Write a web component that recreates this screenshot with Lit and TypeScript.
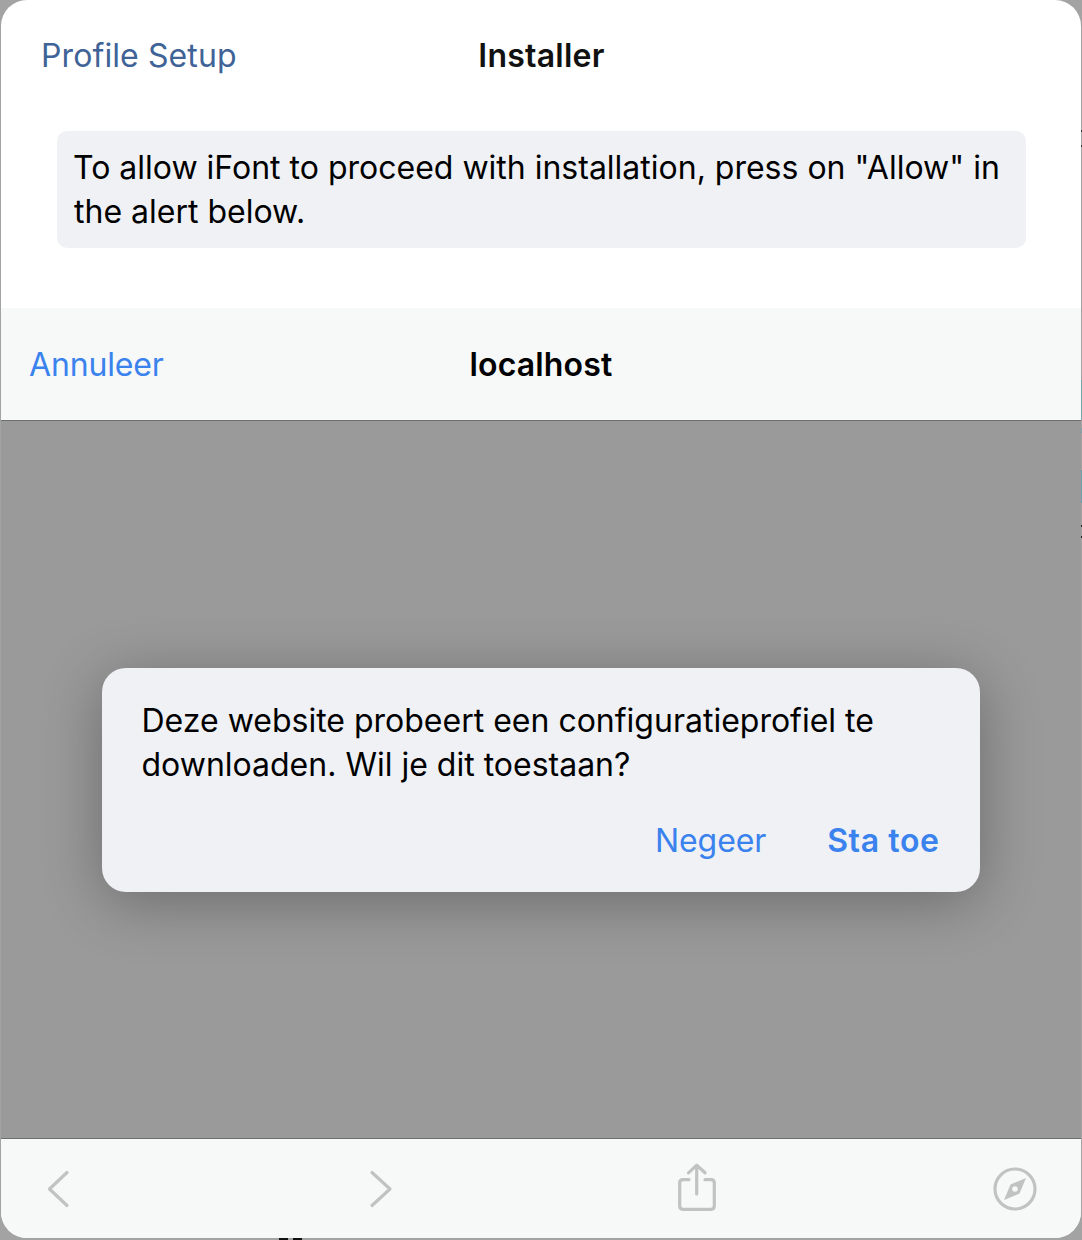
import { LitElement, html, css } from "lit"
import { customElement } from "lit/decorators.js"

// slivers of the page behind the sheet, visible along its right and bottom edge
const EDGE_MARKS = [
  { x: 1081, y: 130, w: 1, h: 2, color: "#333" },
  { x: 1081, y: 145, w: 1, h: 2, color: "#333" },
  { x: 1081, y: 380, w: 1, h: 40, color: "#6fa9ad" },
  { x: 1081, y: 428, w: 1, h: 5, color: "#7fa5ad" },
  { x: 1081, y: 470, w: 1, h: 33, color: "#6d9fb3" },
  { x: 1081, y: 525, w: 1, h: 2, color: "#222" },
  { x: 1081, y: 536, w: 1, h: 2, color: "#222" },
  { x: 279, y: 1238, w: 9, h: 2, color: "#111" },
  { x: 293, y: 1238, w: 9, h: 2, color: "#111" },
]

@customElement("app-root")
export class AppRoot extends LitElement {
  static styles = css`
    :host {
      display: block;
      position: relative;
      width: 1082px;
      height: 1240px;
      background: #a3a3a3;
      font-family: Inter, "Liberation Sans", sans-serif;
      color: #000;
      overflow: hidden;
    }

    .mark {
      position: absolute;
    }

    .sheet {
      width: 1080px;
      height: 1238px;
      margin-left: 1px;
      border-radius: 26px;
      overflow: hidden;
      display: flex;
      flex-direction: column;
      background: #fff;
    }

    .setup {
      height: 308px;
      flex: none;
      box-sizing: border-box;
      padding: 0 55px 0 56px;
      display: flex;
      flex-direction: column;
    }

    .nav {
      height: 111px;
      flex: none;
      display: grid;
      grid-template-columns: 1fr auto 1fr;
      align-items: center;
      font-size: 32px;
    }

    .nav .back {
      margin-left: -16px;
      margin-bottom: 1px;
      letter-spacing: 0.1px;
      color: #3f6397;
    }

    .nav .title {
      font-weight: 600;
      letter-spacing: 0.25px;
      color: #111;
    }

    .banner {
      margin-top: 20px;
      height: 117px;
      box-sizing: border-box;
      padding: 15px 17px;
      border-radius: 10px;
      background: #eff1f5;
      font-size: 32px;
      line-height: 44px;
      text-indent: -1px;
    }

    .webbar {
      height: 113px;
      flex: none;
      box-sizing: border-box;
      padding-left: 28px;
      background: #f7f8f8;
      border-bottom: 1px solid #6f6f6f;
      display: grid;
      grid-template-columns: 1fr auto 1fr;
      align-items: center;
      font-size: 32px;
    }

    .webbar .cancel {
      letter-spacing: -0.15px;
      color: #3a82ee;
    }

    .webbar .title {
      margin-left: -28px;
      font-weight: 600;
      letter-spacing: 0.15px;
    }

    .dim {
      flex: 1;
      background: #9a9a9a;
      display: flex;
      justify-content: center;
      align-items: flex-start;
    }

    .alert {
      width: 878px;
      height: 224px;
      margin-top: 247px;
      margin-right: 1px;
      box-sizing: border-box;
      padding: 31px 40px 0;
      border-radius: 24px;
      background: #eff1f5;
      box-shadow: 0 10px 60px rgba(0, 0, 0, 0.3);
      font-size: 32px;
      line-height: 44px;
    }

    .actions {
      display: flex;
      justify-content: flex-end;
      gap: 61px;
      margin-top: 32px;
      color: #3a82ee;
    }

    .actions .quiet {
      letter-spacing: -0.1px;
    }

    .actions .primary {
      font-weight: 600;
      letter-spacing: 0.6px;
    }

    .toolbar {
      height: 100px;
      flex: none;
      box-sizing: border-box;
      padding: 21px 41px 0 44px;
      border-top: 1px solid #6f6f6f;
      background: #f7f8f8;
      display: flex;
      align-items: flex-start;
    }

    .toolbar svg {
      flex: none;
      fill: none;
      stroke: #c2c2c2;
      stroke-width: 3.2;
      stroke-linecap: round;
      stroke-linejoin: round;
    }

    .prev {
      margin-top: 8px;
    }

    .next {
      margin-top: 8px;
      margin-left: 294px;
    }

    .share {
      margin-top: 1px;
      margin-left: 280px;
    }

    .compass {
      margin-top: 4px;
      margin-left: auto;
    }
  `

  render() {
    return html`
      ${EDGE_MARKS.map(
        (m) => html`<span
          class="mark"
          style="left:${m.x}px;top:${m.y}px;width:${m.w}px;height:${m.h}px;background:${m.color}"
        ></span>`
      )}
      <div class="sheet">
        <div class="setup">
          <div class="nav">
            <span class="back">Profile Setup</span>
            <span class="title">Installer</span>
            <span></span>
          </div>
          <div class="banner">
            To allow iFont to proceed with installation, press on "Allow" in the alert below.
          </div>
        </div>
        <div class="webbar">
          <span class="cancel">Annuleer</span>
          <span class="title">localhost</span>
          <span></span>
        </div>
        <div class="dim">
          <div class="alert">
            Deze website probeert een configuratieprofiel te downloaden. Wil je dit toestaan?
            <div class="actions">
              <span class="quiet">Negeer</span>
              <span class="primary">Sta toe</span>
            </div>
          </div>
        </div>
        <div class="toolbar">
          <svg class="prev" width="28" height="42" viewBox="0 0 28 42">
            <path d="M22 4.5 L4.5 21 L22 37.5" />
          </svg>
          <svg class="next" width="28" height="42" viewBox="0 0 28 42">
            <path d="M5 4.5 L23 21 L5 37.5" />
          </svg>
          <svg class="share" width="44" height="56" viewBox="0 0 44 56">
            <path d="M14 18.7 H8 Q4.7 18.7 4.7 22 V45 Q4.7 48.3 8 48.3 H36 Q39.3 48.3 39.3 45 V22 Q39.3 18.7 36 18.7 H30" />
            <path d="M21.7 33 V5 M13.5 11.8 L21.7 4.2 L30 11.8" />
          </svg>
          <svg class="compass" width="50" height="50" viewBox="0 0 50 50">
            <circle cx="25" cy="25" r="20" />
            <path d="M36 14 L29.5 29.5 L14 36 L20.5 20.5 Z" fill="#c2c2c2" stroke="none" />
            <circle cx="25" cy="25" r="2.8" fill="#f7f8f8" stroke="none" />
          </svg>
        </div>
      </div>
    `
  }
}
